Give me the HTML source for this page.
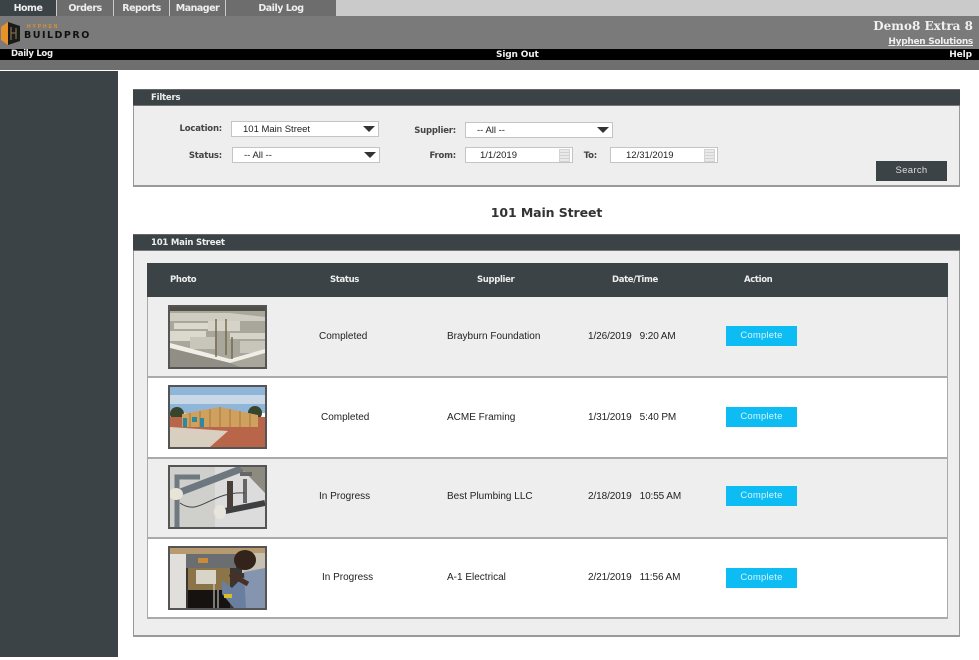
<!DOCTYPE html>
<html><head><meta charset="utf-8"><style>
html,body{margin:0;padding:0;background:#fff}
#p{position:relative;width:979px;height:660px;overflow:hidden;background:#fff;font-family:"Liberation Sans",sans-serif;color:#222;filter:blur(.3px)}
#p div{position:absolute;box-sizing:border-box}
.t{white-space:nowrap;line-height:12px}
.v{font-family:"DejaVu Sans",sans-serif;font-weight:bold}
.n{top:0;height:16px;background:#6d6d6d;color:#eee;font:bold 9.5px/17px "DejaVu Sans",sans-serif;text-align:center;letter-spacing:-.5px}
.h{left:133px;width:827px;height:17px;background:#3b4346;color:#eee;font:bold 8.5px/16px "DejaVu Sans",sans-serif;padding-left:18px;border-top:1px solid #666;border-bottom:1px solid #777;letter-spacing:-.2px}
.l{font:bold 8.5px/12px "DejaVu Sans",sans-serif;color:#444;text-align:right;white-space:nowrap;letter-spacing:-.2px}
.i{background:#fff;border:1px solid #c4c4c4;height:16px;font:9.5px/15px "Liberation Sans",sans-serif;color:#222;white-space:nowrap}
.a{width:0;height:0;border-left:6px solid transparent;border-right:6px solid transparent;border-top:6px solid #333;top:4px}
.c{top:1px;right:2px;width:11px;height:13px;background:repeating-linear-gradient(#e9e9e9 0 2px,#d2d2d2 2px 3px);border:1px solid #d4d4d4}
.th{top:274px;color:#eee;font:bold 8.5px/12px "DejaVu Sans",sans-serif;white-space:nowrap;letter-spacing:-.35px}
.td{font:10px/12px "Liberation Sans",sans-serif;color:#222;white-space:nowrap}
.b{left:726px;width:71px;height:20px;background:#0dbcf2;color:#d8f4fd;font:9.5px/20px "Liberation Sans",sans-serif;text-align:center;letter-spacing:.2px}
.ph{left:168px;width:99px;height:64px;border:2px solid #555;overflow:hidden}
.ph svg{display:block}
</style></head><body><div id="p">
<div style="left:0;top:0;width:979px;height:16px;background:#cacaca"></div>
<div class="n" style="left:0;width:56px;background:#3b4346">Home</div>
<div class="n" style="left:57px;width:56px">Orders</div>
<div class="n" style="left:114px;width:55px">Reports</div>
<div class="n" style="left:170px;width:55px">Manager</div>
<div class="n" style="left:226px;width:110px">Daily Log</div>
<div style="left:0;top:16px;width:979px;height:33px;background:#7a7a7a"></div>
<svg style="position:absolute;left:0;top:21px" width="24" height="25" viewBox="0 0 24 25"><path d="M1 6 8 1V24L1 19Z" fill="#e8932a"/><path d="M8 1 20 5V20L8 24Z" fill="#1c1a18"/><path d="M11 6V19M16 7V18M11 12H16" stroke="#7a6a50" stroke-width="1.3" fill="none"/></svg>
<div class="t" style="left:27px;top:24px;font:bold 5px/7px 'Liberation Sans',sans-serif;letter-spacing:1.9px;color:#e0922c">HYPHEN</div>
<div class="t" style="left:24px;top:30px;font:bold 9.5px/12px 'DejaVu Sans',sans-serif;letter-spacing:1.5px;color:#111">BUILDPRO</div>
<div class="t" style="right:6px;top:19px;font:bold 12px/15px 'DejaVu Serif','Liberation Serif',serif;color:#f0f0f0">Demo8 Extra 8</div>
<div class="t" style="right:6px;top:36px;font:bold 9px/12px 'DejaVu Sans',sans-serif;letter-spacing:-.3px;color:#eee;text-decoration:underline">Hyphen Solutions</div>
<div style="left:0;top:49px;width:979px;height:11px;background:#000"></div>
<div class="t v" style="left:11px;top:48px;font-size:8.5px;letter-spacing:-.3px;color:#eee">Daily Log</div>
<div class="t v" style="left:496px;top:49px;font-size:9px;letter-spacing:-.15px;color:#eee">Sign Out</div>
<div class="t v" style="right:7px;top:49px;font-size:9px;letter-spacing:-.1px;color:#eee">Help</div>
<div style="left:0;top:60px;width:979px;height:10px;background:#6f6f6f"></div>
<div style="left:0;top:71px;width:118px;height:586px;background:#3b4346"></div>

<div style="left:133px;top:89px;width:827px;height:98px;background:#eee;border:1px solid #999;border-bottom:2px solid #999"></div>
<div class="h" style="top:89px">Filters</div>
<div class="l" style="left:150px;width:72px;top:123px">Location:</div>
<div class="i" style="left:231px;top:121px;width:148px;padding-left:11px">101 Main Street<div class="a" style="right:3px"></div></div>
<div class="l" style="left:380px;width:76px;top:125px">Supplier:</div>
<div class="i" style="left:465px;top:122px;width:148px;padding-left:11px">-- All --<div class="a" style="right:3px"></div></div>
<div class="l" style="left:150px;width:72px;top:150px">Status:</div>
<div class="i" style="left:232px;top:147px;width:148px;padding-left:11px">-- All --<div class="a" style="right:3px"></div></div>
<div class="l" style="left:380px;width:76px;top:150px">From:</div>
<div class="i" style="left:465px;top:147px;width:108px;padding-left:14px">1/1/2019<div class="c"></div></div>
<div class="l" style="left:570px;width:27px;top:150px">To:</div>
<div class="i" style="left:610px;top:147px;width:108px;padding-left:15px">12/31/2019<div class="c"></div></div>
<div style="left:876px;top:161px;width:71px;height:20px;background:#3b4346;color:#ddd;font:9.5px/19px 'Liberation Sans',sans-serif;text-align:center;letter-spacing:.3px">Search</div>

<div class="t" style="left:133px;width:827px;top:205px;text-align:center;font:bold 12.5px/16px 'DejaVu Sans',sans-serif;color:#333;letter-spacing:-.1px">101 Main Street</div>

<div style="left:133px;top:234px;width:827px;height:403px;background:#eee;border:1px solid #999;border-bottom:2px solid #999"></div>
<div class="h" style="top:234px">101 Main Street</div>
<div style="left:147px;top:263px;width:801px;height:356px;background:#fff;border:1px solid #aaa;border-bottom:2px solid #aaa"></div>
<div style="left:147px;top:263px;width:801px;height:34px;background:#3b4346"></div>
<div style="left:148px;top:297px;width:799px;height:81px;background:#eee;border-bottom:2px solid #aaa"></div>
<div style="left:148px;top:378px;width:799px;height:81px;background:#fff;border-bottom:2px solid #aaa"></div>
<div style="left:148px;top:459px;width:799px;height:80px;background:#eee;border-bottom:2px solid #aaa"></div>

<div class="th" style="left:170px">Photo</div>
<div class="th" style="left:330px">Status</div>
<div class="th" style="left:477px">Supplier</div>
<div class="th" style="left:612px">Date/Time</div>
<div class="th" style="left:744px">Action</div>

<div class="ph" style="top:305px"><svg width="95" height="60" viewBox="0 0 95 60"><rect width="95" height="60" fill="#a9a69c"/><rect width="95" height="4" fill="#4f4f46"/><path d="M0 6H60L95 10V14H0Z" fill="#cfccc2"/><path d="M4 16H50V22H4ZM0 24H36V34H0Z" fill="#dbd8ce"/><path d="M38 14H70V24H38ZM60 26H95V32H60Z" fill="#d6d3c9"/><path d="M20 30H45V42H20ZM70 34H95V46H70Z" fill="#c8c5bb"/><path d="M0 36 60 52 95 42V46L60 56 0 41Z" fill="#f0eee6"/><path d="M0 41 60 56 70 60H0Z" fill="#918e85"/><path d="M46 12V50M56 12V48M62 30V52" stroke="#6e6845" stroke-width="1.4"/></svg></div>
<div class="ph" style="top:385px"><svg width="95" height="60" viewBox="0 0 95 60"><rect width="95" height="26" fill="#8fb6d8"/><rect y="8" width="95" height="9" fill="#c8d8e6"/><circle cx="7" cy="27" r="7" fill="#36452c"/><circle cx="85" cy="26" r="7" fill="#36452c"/><rect y="30" width="95" height="30" fill="#b9654a"/><path d="M0 40 58 44 40 60H0Z" fill="#d9cfc0"/><path d="M12 27 50 20 88 28V40H12Z" fill="#cfa05e"/><path d="M20 26V40M30 24V40M40 22V40M50 20V40M60 22V40M70 24V40M80 26V40" stroke="#a67a3e"/><rect x="13" y="31" width="4" height="9" fill="#2a8aa0"/><rect x="30" y="31" width="4" height="9" fill="#2a8aa0"/><rect x="22" y="30" width="5" height="5" fill="#2a8aa0"/></svg></div>
<div class="ph" style="top:465px"><svg width="95" height="60" viewBox="0 0 95 60"><rect width="95" height="60" fill="#dcdcdc"/><rect width="45" height="60" fill="#cfcfcc"/><path d="M7 60V10H30" stroke="#6f7a80" stroke-width="5" fill="none"/><path d="M8 26 76 0" stroke="#6c7780" stroke-width="7"/><path d="M70 0H95V26Z" fill="#8d8a80"/><ellipse cx="6" cy="27" rx="7" ry="6" fill="#e7e4d8"/><path d="M55 44 95 36" stroke="#3d3f40" stroke-width="6"/><ellipse cx="50" cy="45" rx="6" ry="7" fill="#e8e6dc"/><path d="M60 42V14" stroke="#4a3f38" stroke-width="6"/><path d="M75 36V12M70 7H82" stroke="#666" stroke-width="4"/><path d="M10 36C30 50 40 24 75 26" stroke="#444" stroke-width="1" fill="none"/></svg></div>
<div class="ph" style="top:546px"><svg width="95" height="60" viewBox="0 0 95 60"><rect width="95" height="60" fill="#3a3530"/><rect width="95" height="6" fill="#b89a70"/><rect y="6" width="16" height="54" fill="#e0dfdc"/><rect x="16" y="6" width="50" height="14" fill="#6b6e70"/><rect x="18" y="20" width="42" height="22" fill="#8a7448"/><rect x="18" y="42" width="42" height="18" fill="#15120f"/><rect x="26" y="22" width="20" height="14" fill="#d8d4c8"/><rect x="28" y="10" width="10" height="5" fill="#c98a3a"/><rect x="72" y="5" width="23" height="20" fill="#c8c0b0"/><path d="M52 32 62 40 72 30 95 26V60H64L52 46Z" fill="#6a7ea0"/><path d="M74 24 95 20V60H76Z" fill="#8595b0"/><ellipse cx="75" cy="12" rx="11" ry="10" fill="#33231a"/><path d="M60 26 78 36" stroke="#4a3024" stroke-width="5"/><rect x="54" y="46" width="8" height="4" fill="#d6bd2e"/><path d="M44 36V60M48 42V60" stroke="#ddd" stroke-width="1"/></svg></div>

<div class="td" style="left:319px;top:331px">Completed</div>
<div class="td" style="left:447px;top:331px">Brayburn Foundation</div>
<div class="td" style="left:588px;top:331px;letter-spacing:-.1px">1/26/2019 &nbsp; 9:20 AM</div>
<div class="b" style="top:326px">Complete</div>

<div class="td" style="left:321px;top:412px">Completed</div>
<div class="td" style="left:447px;top:412px">ACME Framing</div>
<div class="td" style="left:588px;top:412px;letter-spacing:-.1px">1/31/2019 &nbsp; 5:40 PM</div>
<div class="b" style="top:407px">Complete</div>

<div class="td" style="left:319px;top:491px">In Progress</div>
<div class="td" style="left:447px;top:491px">Best Plumbing LLC</div>
<div class="td" style="left:588px;top:491px;letter-spacing:-.1px">2/18/2019 &nbsp; 10:55 AM</div>
<div class="b" style="top:486px">Complete</div>

<div class="td" style="left:322px;top:572px">In Progress</div>
<div class="td" style="left:447px;top:572px">A-1 Electrical</div>
<div class="td" style="left:588px;top:572px;letter-spacing:-.1px">2/21/2019 &nbsp; 11:56 AM</div>
<div class="b" style="top:568px">Complete</div>
</div></body></html>
